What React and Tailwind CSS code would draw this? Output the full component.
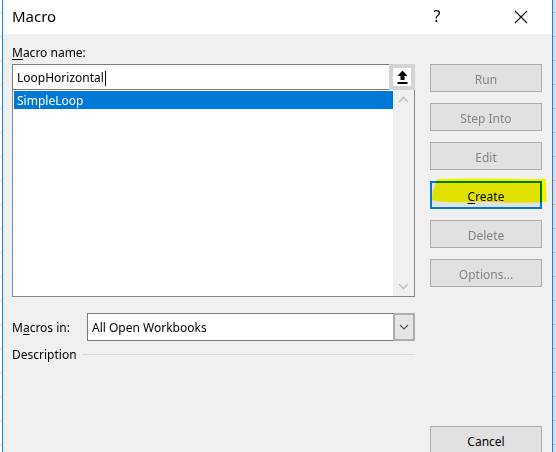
import React from "react";

const font = { fontFamily: '"Noto Sans", "Open Sans", sans-serif' };

function Btn({ children, disabled = true, className = "" }) {
  return (
    <div
      className={`h-[28px] w-full flex items-center justify-center border bg-[#e1e1e1] text-[12px] ${
        disabled ? "border-[#adadad] text-[#838383]" : "border-[#0078d7] text-black"
      } ${className}`}
    >
      {children}
    </div>
  );
}

export default function App() {
  return (
    <div
      className="w-[556px] h-[452px] flex overflow-hidden bg-white select-none"
      style={font}
    >
      <div className="w-[2px] h-full bg-[image:repeating-linear-gradient(to_bottom,#ffffff_0px,#ffffff_12px,#d4d4d4_12px,#d4d4d4_13px,#ffffff_13px,#ffffff_24px)]" />
      <div className="flex-1 h-full flex flex-col border-x border-[#1883d7]">
        {/* Title bar */}
        <div className="h-[34px] bg-white flex items-center pl-[9px] shrink-0">
          <span className="text-[15px] text-black -translate-y-px">Macro</span>
          <div className="ml-auto flex items-center">
            <div className="w-[46px] flex justify-center text-[16px] text-black -translate-y-px">?</div>
            <div className="w-[38px]" />
            <div className="w-[46px] flex justify-center">
              <svg width="14" height="14" viewBox="0 0 14 14">
                <path d="M1 1 L13 13 M13 1 L1 13" stroke="#111" strokeWidth="1.1" fill="none" />
              </svg>
            </div>
            <div className="w-[8px]" />
          </div>
        </div>
        {/* Body */}
        <div className="flex-1 bg-[#f0f0f0] flex pl-[9px]">
          <div className="w-[403px] flex flex-col pt-[10px]">
            <div className="h-[17px] leading-[17px] text-[12px] text-black">
              <span className="underline underline-offset-2">M</span>acro name:
            </div>
            <div className="mt-[3px] h-[26px] border border-[#7a7a7a] bg-white flex">
              <div className="flex-1 flex items-center pl-[4px] pt-[2px] text-[12px] text-black">
                LoopHorizontal
                <span className="inline-block w-px h-[15px] bg-black ml-[1px]" />
              </div>
              <div className="w-[26px] -my-px -mr-px border-[4px] border-[#d4d4d4] bg-white flex items-center justify-center">
                <svg width="11" height="14" viewBox="0 0 11 14">
                  <path d="M5.5 0.5 L10.5 6 L7.5 6 L7.5 10 L3.5 10 L3.5 6 L0.5 6 Z" fill="#000" />
                  <rect x="0.5" y="12" width="10" height="2" fill="#000" />
                </svg>
              </div>
            </div>
            <div className="h-[207px] border border-t-0 border-[#828790] bg-white flex">
              <div className="flex-1 pl-[1px] pt-[1px]">
                <div className="h-[18px] bg-[#0078d7] text-white text-[12px] leading-[18px] pl-[3px] pt-[1px]">
                  SimpleLoop
                </div>
              </div>
              <div className="w-[21px] bg-[#f0f0f0] flex flex-col items-center justify-between py-[6px]">
                <svg width="11" height="7" viewBox="0 0 11 7">
                  <path d="M1 6 L5.5 1.5 L10 6" stroke="#c2c2c2" strokeWidth="1.6" fill="none" />
                </svg>
                <svg width="11" height="7" viewBox="0 0 11 7">
                  <path d="M1 1 L5.5 5.5 L10 1" stroke="#c2c2c2" strokeWidth="1.6" fill="none" />
                </svg>
              </div>
            </div>
            <div className="mt-[16px] h-[28px] flex items-center">
              <div className="w-[75px] text-[12px] text-black pt-[1px]">
                M<span className="underline underline-offset-2">a</span>cros in:
              </div>
              <div className="flex-1 h-full border border-[#7a7a7a] bg-white flex">
                <div className="flex-1 flex items-center pl-[4px] pt-[1px] text-[12px] text-black">
                  All Open Workbooks
                </div>
                <div className="w-[22px] -my-px -mr-px border-2 border-[#adadad] bg-[#e5e5e5] flex items-center justify-center">
                  <svg width="10" height="6" viewBox="0 0 10 6">
                    <path d="M1 1 L5 5 L9 1" stroke="#505050" strokeWidth="1.1" fill="none" />
                  </svg>
                </div>
              </div>
            </div>
            <div className="mt-[6px] h-[16px] flex items-center">
              <span className="text-[12px] text-black">Description</span>
              <div className="flex-1 ml-[5px] h-px bg-[#d9d9d9] -translate-y-px" />
            </div>
          </div>
          <div className="w-[112px] ml-[15px] flex flex-col pt-[30px]">
            <Btn className="pt-[3px]">Run</Btn>
            <Btn className="mt-[11px] pt-[3px]">Step Into</Btn>
            <Btn className="mt-[11px] pt-[3px]">Edit</Btn>
            <div className="relative mt-[11px]">
              <Btn disabled={false} className="border-2 pt-[3px]">
                <span className="underline underline-offset-2">C</span>reate
              </Btn>
              <svg
                className="absolute left-0 top-[-3px] mix-blend-multiply pointer-events-none"
                width="118"
                height="30"
                viewBox="0 0 118 30"
              >
                <path
                  d="M7 1 L40 0.5 L116 1 L116.5 24 L90 25 L60 24 L30 24.5 L8 23.5 L2 22 L2.5 14 L5 8 Z"
                  fill="#ffff00"
                />
              </svg>
            </div>
            <Btn className="mt-[11px] pt-[3px]">Delete</Btn>
            <Btn className="mt-[11px] pt-[3px]">Options...</Btn>
            <div className="mt-auto">
              <div className="h-[28px] w-full flex items-center justify-center border border-[#adadad] bg-[#e1e1e1] text-[12px] text-black translate-y-[2px] pt-[3px]">
                Cancel
              </div>
            </div>
          </div>
        </div>
      </div>
      <div className="w-[3px] h-full bg-[image:repeating-linear-gradient(to_bottom,#dcdcdc_0px,#dcdcdc_12px,#bcbcbc_12px,#bcbcbc_13px,#dcdcdc_13px,#dcdcdc_24px)]" />
    </div>
  );
}
